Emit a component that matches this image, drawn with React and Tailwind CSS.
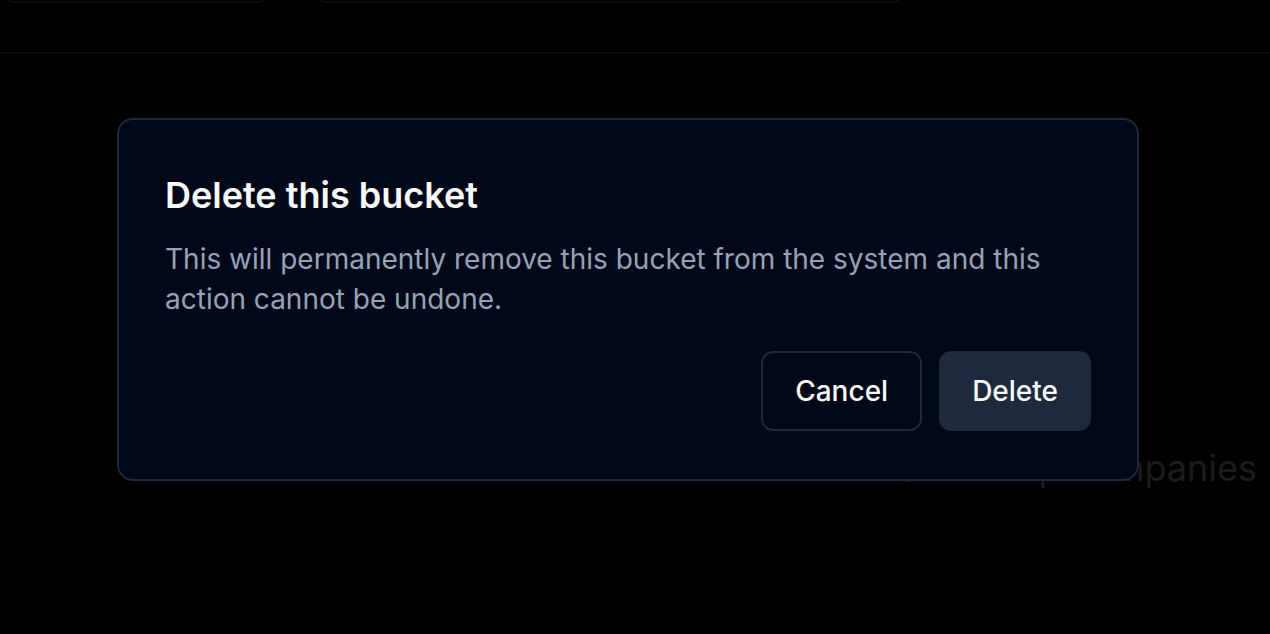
import { useState } from 'react'

export default function App() {
  const [open, setOpen] = useState(true)

  return (
    <div className="relative h-[634px] w-[1270px] overflow-hidden bg-black font-['Inter','Liberation_Sans',sans-serif]">
      {/* page underneath the dialog */}
      <header className="flex h-[54px] flex-col border-b-2 border-[#3a3a3a]">
        <div className="-mt-[77px] flex items-start gap-[40px]">
          <div className="h-[80px] w-[272px] rounded-[14px] border-2 border-[#444]" />
          <div className="h-[80px] w-[593px] rounded-[14px] border-2 border-[#444]" />
        </div>
      </header>
      <div className="flex justify-end pr-[13px] pt-[390px]">
        <p className="text-[36px] leading-[48px] text-[#8a8a8a]">Trusted at the top companies</p>
      </div>

      {/* overlay */}
      {open && (
        <div className="absolute inset-0 bg-black/80 pl-[117px] pt-[118px]">
          <div className="w-[1022px] rounded-2xl border-2 border-[#1e293b] bg-[#020817] px-[46px] pb-[48px] pt-[47px]">
            <div className="flex flex-col gap-4">
              <h2 className="text-[36px] font-semibold leading-[56px] text-[#f8fafc]">Delete this bucket</h2>
              <p className="text-[28px] leading-[40px] text-[#94a3b8]">
                This will permanently remove this bucket from the system and this action cannot be undone.
              </p>
            </div>
            <div className="mt-8 flex justify-end gap-[17px]">
              <button
                type="button"
                onClick={() => setOpen(false)}
                className="h-[80px] rounded-[12px] border-2 border-[#1e293b] bg-[#020817] px-[32px] text-[28px] font-medium text-[#f8fafc]"
              >
                Cancel
              </button>
              <button
                type="button"
                onClick={() => setOpen(false)}
                className="h-[80px] rounded-[12px] bg-[#1e293b] px-[33px] text-[28px] font-medium text-[#f8fafc]"
              >
                Delete
              </button>
            </div>
          </div>
        </div>
      )}
    </div>
  )
}
